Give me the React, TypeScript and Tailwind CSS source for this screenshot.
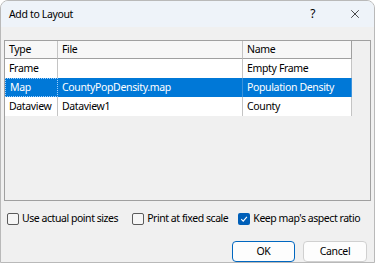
import { X } from "lucide-react";

const rows = [
  { type: "Frame", file: "", name: "Empty Frame" },
  { type: "Map", file: "CountyPopDensity.map", name: "Population Density", selected: true },
  { type: "Dataview", file: "Dataview1", name: "County" },
];

function CheckBox({ checked, label }: { checked?: boolean; label: string }) {
  return (
    <label className="flex items-center gap-[3px] whitespace-nowrap">
      {checked ? (
        <span className="flex h-[12px] w-[12px] shrink-0 items-center justify-center rounded-[2px] bg-[#005fb8]">
          <svg width="8" height="8" viewBox="0 0 8 8" fill="none">
            <path d="M1.2 4.2 L3.2 6.1 L6.9 1.8" stroke="white" strokeWidth="1.1" />
          </svg>
        </span>
      ) : (
        <span className="h-[12px] w-[12px] shrink-0 rounded-[2px] border border-[#5b5b5b] bg-[#f6f6f6]" />
      )}
      <span>{label}</span>
    </label>
  );
}

export default function App() {
  return (
    <div
      className="flex h-[263px] w-[375px] flex-col overflow-hidden whitespace-nowrap rounded-t-[8px] border border-[#b9b9b9] bg-[#f0f0f0] text-[10.5px] tracking-[-0.35px] text-black"
      style={{ fontFamily: '"Noto Sans", "Open Sans", sans-serif' }}
    >
      <div className="flex h-[26px] shrink-0 items-center bg-[#eef3f9] pl-[8px]">
        <span className="leading-none">Add to Layout</span>
        <span className="ml-auto mr-[33px] text-[12px] leading-none">?</span>
        <X className="mr-[12px] h-[14px] w-[14px]" strokeWidth={1.2} />
      </div>

      <div className="px-[3px] pt-[13px]">
        <div className="h-[161px] border border-[#a0a0a0] bg-[#f0f0f0]">
          <div className="w-[347px]">
            <div className="grid grid-cols-[53px_185px_109px] bg-[#f7f7f7]">
              <div className="h-[18px] border-b border-r border-b-[#a0a0a0] border-r-[#c4c4c4] pl-[4px] leading-[17px]">Type</div>
              <div className="h-[18px] border-b border-r border-b-[#a0a0a0] border-r-[#c4c4c4] pl-[4px] leading-[17px]">File</div>
              <div className="h-[18px] border-b border-r border-[#a0a0a0] pl-[4px] leading-[17px]">Name</div>
            </div>
            {rows.map((r) => (
              <div
                key={r.type}
                className={`grid h-[19px] grid-cols-[53px_185px_109px] leading-[18px] ${
                  r.selected ? "bg-[#0078d7] text-white" : "bg-white"
                }`}
              >
                <div
                  className={`overflow-hidden pl-[4px] ${
                    r.selected ? "border border-dotted border-[#9fd0ff] pl-[3px] leading-[16px]" : "border-r border-[#c4c4c4]"
                  }`}
                >
                  {r.type}
                </div>
                <div className={`overflow-hidden border-r pl-[4px] ${r.selected ? "border-[#3b93dd]" : "border-[#c4c4c4]"}`}>
                  {r.file}
                </div>
                <div className={`overflow-hidden border-r pl-[4px] ${r.selected ? "border-[#3b93dd]" : "border-[#c4c4c4]"}`}>
                  {r.name}
                </div>
              </div>
            ))}
          </div>
        </div>
      </div>

      <div className="mt-[11px] flex h-[14px] items-center pl-[6px] tracking-[-0.45px]">
        <CheckBox label="Use actual point sizes" />
        <div className="ml-[14px]">
          <CheckBox label="Print at fixed scale" />
        </div>
        <div className="ml-[10px]">
          <CheckBox checked label="Keep map's aspect ratio" />
        </div>
      </div>

      <div className="mt-[15px] flex justify-end gap-[8px] pr-[7px]">
        <button className="h-[21px] w-[63px] rounded-[4px] border border-[#0067c0] bg-[#fdfdfd] leading-none">
          OK
        </button>
        <button className="h-[21px] w-[64px] rounded-[4px] border border-[#d0d0d0] bg-[#fdfdfd] leading-none">
          Cancel
        </button>
      </div>
    </div>
  );
}
